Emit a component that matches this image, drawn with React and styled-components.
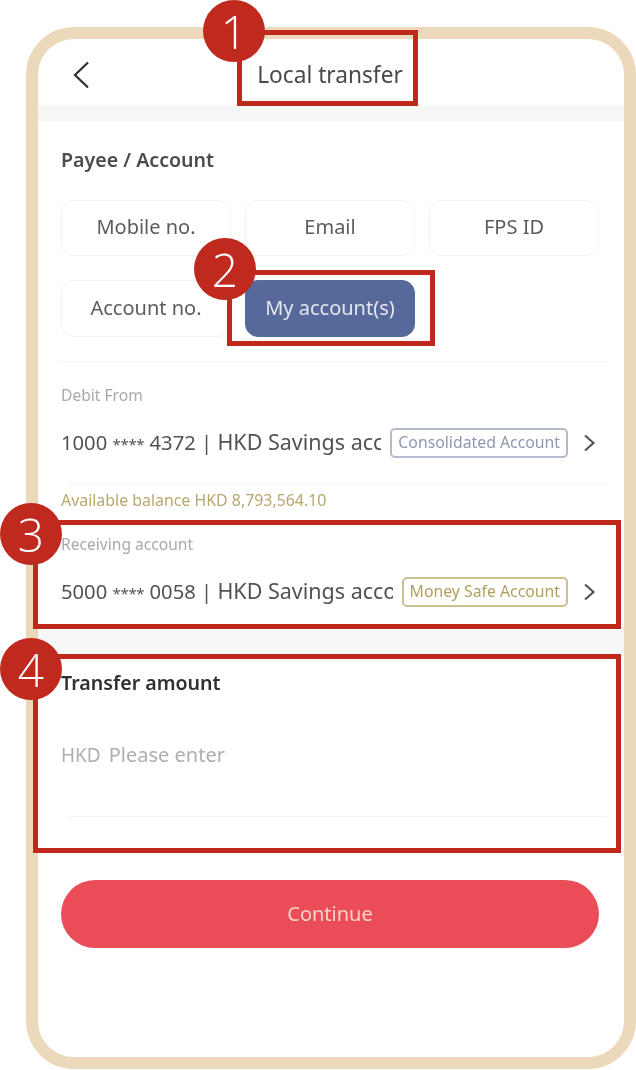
import React from "react";
import styled, { createGlobalStyle } from "styled-components";

const Global = createGlobalStyle`
  html, body { margin: 0; padding: 0; background: #fff; }
  body { font-family: "Noto Sans", "Open Sans", sans-serif; color: #444; overflow: hidden; }
  * { box-sizing: border-box; }
`;

const Page = styled.div`
  position: relative;
  width: 636px;
  height: 1070px;
  padding: 27px 0 0 26px;
  overflow: hidden;
  filter: blur(0.55px);
`;

const Phone = styled.div`
  width: 610px;
  height: 1042px;
  border: 12px solid #ecd9bb;
  border-radius: 48px;
  background: #fff;
  overflow: hidden;
`;

const Header = styled.header`
  height: 66px;
  display: flex;
  align-items: center;
  justify-content: center;
  position: relative;
  padding-top: 5px;
`;

const BackButton = styled.span`
  position: absolute;
  left: 34px;
  top: 22px;
  display: flex;
`;

const Title = styled.h1`
  margin: 0 0 0 -2px;
  font-size: 22.7px;
  font-weight: 400;
  color: #4a4a4c;
`;

const Band = styled.div`
  height: ${(p) => p.$h}px;
  margin-top: ${(p) => p.$top || 0}px;
  background: #f7f7f7;
`;

const Section = styled.section`
  padding: 0 17px 0 23px;
`;

const SectionTitle = styled.h2`
  margin: ${(p) => p.$top}px 0 0;
  font-size: 19.6px;
  line-height: 26px;
  font-weight: 600;
  color: ${(p) => (p.$dark ? "#303032" : "#4c4c4e")};
`;

const Options = styled.div`
  display: grid;
  grid-template-columns: repeat(3, 170px);
  grid-template-rows: 56px 57px;
  gap: 24px 14px;
  margin-top: 27px;
  padding-bottom: 24px;
  border-bottom: 1px solid #f3f3f3;
`;

const Option = styled.div`
  display: flex;
  align-items: center;
  justify-content: center;
  padding-bottom: 3px;
  font-size: 20px;
  border-radius: 13px;
  color: ${(p) => (p.$active ? "#e4e6ee" : "#5c5c5e")};
  background: ${(p) => (p.$active ? "#56699a" : "#fff")};
  border: 1px solid ${(p) => (p.$active ? "#56699a" : "#f2f2f2")};
`;

const Label = styled.div`
  margin-top: ${(p) => p.$top}px;
  font-size: 15.6px;
  line-height: 20px;
  color: #a9a9a9;
`;

const AccountRow = styled.div`
  display: flex;
  align-items: center;
  height: 40px;
  margin-top: 18px;
  padding-right: 11px;
`;

const AccountText = styled.div`
  flex: 1;
  min-width: 0;
  overflow: hidden;
  white-space: nowrap;
  font-size: 20.2px;
  padding-bottom: 3px;
  color: #525254;
`;

const Mask = styled.span`
  font-size: 15px;
  letter-spacing: -0.3px;
`;

const AccountName = styled.span`
  font-size: 21.5px;
`;

const Tag = styled.span`
  flex: none;
  height: 30px;
  margin: 0 15px 0 9px;
  padding: 0 6px 2px;
  display: flex;
  align-items: center;
  font-size: 15.8px;
  white-space: nowrap;
  border-radius: 5px;
  color: ${(p) => (p.$gold ? "#b3a05c" : "#8e97ae")};
  border: 2px solid ${(p) => (p.$gold ? "#cdbf8e" : "#b4bacb")};
`;

const Divider = styled.div`
  height: 1px;
  margin: ${(p) => p.$top}px 0 0 7px;
  background: #f3f3f3;
`;

const Balance = styled.div`
  margin-top: 6px;
  font-size: 15.9px;
  line-height: 20px;
  color: #b8a86e;
`;

const AmountEntry = styled.div`
  margin-top: 45px;
  display: flex;
  gap: 8px;
  font-size: 20px;
  line-height: 28px;
  color: #aeaeae;
`;

const Currency = styled.span`
  font-size: 19px;
`;

const ContinueButton = styled.button`
  display: block;
  width: 538px;
  height: 68px;
  margin-top: 63px;
  padding: 0 0 2px;
  border: 0;
  border-radius: 34px;
  background: #eb4d58;
  color: #f6d3c8;
  font: 400 20px "Noto Sans", sans-serif;
`;

const Frame = styled.div`
  position: absolute;
  left: ${(p) => p.$x}px;
  top: ${(p) => p.$y}px;
  width: ${(p) => p.$w}px;
  height: ${(p) => p.$h}px;
  border: 5px solid #c0281c;
`;

const Marker = styled.div`
  position: absolute;
  left: ${(p) => p.$x}px;
  top: ${(p) => p.$y}px;
  width: 62px;
  height: 62px;
  border-radius: 50%;
  background: #c0291d;
  color: #fff;
  display: flex;
  align-items: center;
  justify-content: center;
  font-family: "Open Sans", sans-serif;
  font-size: 46px;
  font-weight: 300;
  line-height: 1;
`;

const Chevron = ({ w = 13, h = 18, back }) => (
  <svg width={w} height={h} viewBox={back ? "0 0 19 28" : "0 0 13 18"} fill="none" stroke={back ? "#2f2f31" : "#56565a"} strokeWidth={2.2} style={{ flex: "none" }}>
    <path d={back ? "M16 1.5 3 14l13 12.5" : "M2 1.5 10.5 9 2 16.5"} />
  </svg>
);

export default function App() {
  return (
    <Page>
      <Global />
      <Phone>
        <Header>
          <BackButton><Chevron back w={19} h={28} /></BackButton>
          <Title>Local transfer</Title>
        </Header>
        <Band $h={16} />
        <Section>
          <SectionTitle $top={26}>Payee / Account</SectionTitle>
          <Options>
            <Option>Mobile no.</Option>
            <Option>Email</Option>
            <Option>FPS ID</Option>
            <Option>Account no.</Option>
            <Option $active>My account(s)</Option>
          </Options>
          <Label $top={23}>Debit From</Label>
          <AccountRow>
            <AccountText>1000 <Mask>****</Mask> 4372 | <AccountName>HKD Savings account</AccountName></AccountText>
            <Tag>Consolidated Account</Tag>
            <Chevron />
          </AccountRow>
          <Divider $top={20} />
          <Balance>Available balance HKD 8,793,564.10</Balance>
          <Label $top={24}>Receiving account</Label>
          <AccountRow>
            <AccountText>5000 <Mask>****</Mask> 0058 | <AccountName>HKD Savings account</AccountName></AccountText>
            <Tag $gold>Money Safe Account</Tag>
            <Chevron />
          </AccountRow>
        </Section>
        <Band $h={25} $top={18} />
        <Section>
          <SectionTitle $top={15} $dark>Transfer amount</SectionTitle>
          <AmountEntry><Currency>HKD</Currency><span>Please enter</span></AmountEntry>
          <Divider $top={47} />
          <ContinueButton>Continue</ContinueButton>
        </Section>
      </Phone>
      <Frame $x={237} $y={30} $w={181} $h={76} />
      <Frame $x={227} $y={270} $w={208} $h={76} />
      <Frame $x={33} $y={520} $w={588} $h={109} />
      <Frame $x={33} $y={654} $w={588} $h={199} />
      <Marker $x={203} $y={0}>1</Marker>
      <Marker $x={194} $y={238}>2</Marker>
      <Marker $x={0} $y={503}>3</Marker>
      <Marker $x={0} $y={638}>4</Marker>
    </Page>
  );
}
